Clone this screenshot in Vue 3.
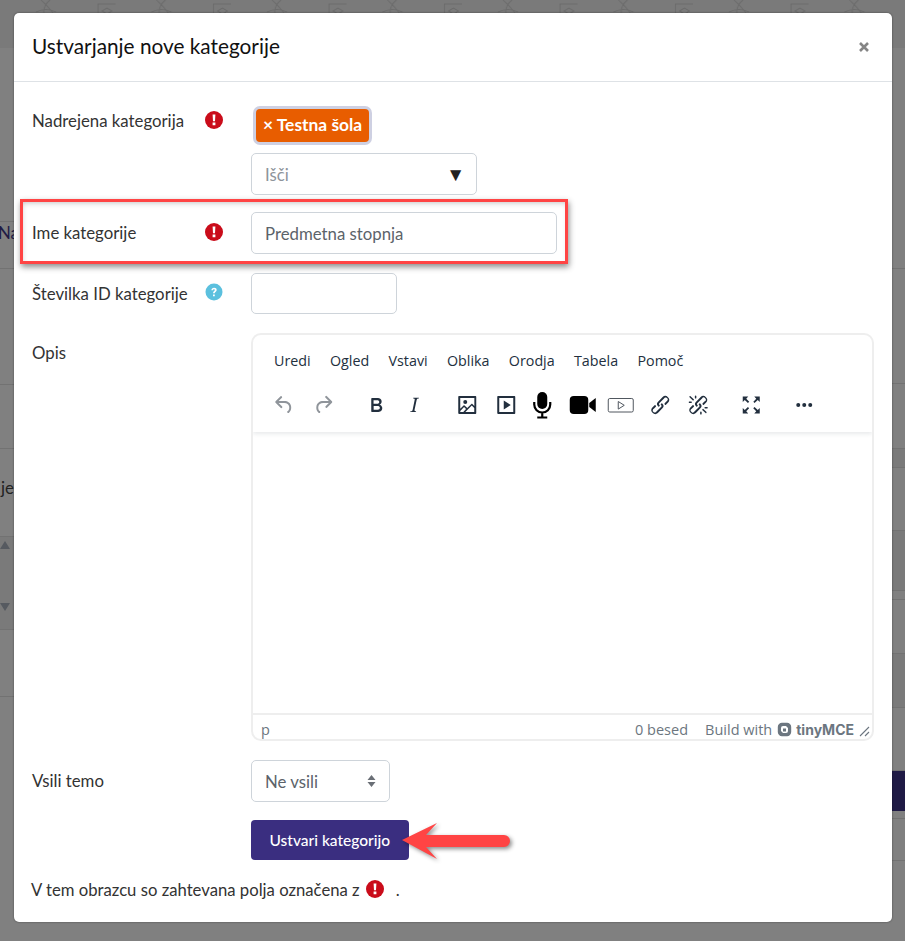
<script setup>
const leftBands = [
  { h: 174 },
  { h: 47, text: 'Na', cls: 'na' },
  { h: 116 },
  { h: 64 },
  { h: 88, text: 'je', cls: 'je' },
  { h: 93, dark: true, sort: true },
  { h: 67 },
  { h: 244, open: true }
]
const rightBands = [
  { h: 221 },
  { h: 115 },
  { h: 65 },
  { h: 19, dark: true },
  { h: 63 },
  { h: 60, dark: true },
  { h: 9 },
  { h: 54 },
  { h: 54, dark: true },
  { h: 63 },
  { h: 40, purple: true },
  { h: 8 },
  { h: 42 },
  { h: 80, open: true }
]
const menus = ['Uredi', 'Ogled', 'Vstavi', 'Oblika', 'Orodja', 'Tabela', 'Pomoč']
</script>

<template>
  <div class="page">
    <div class="backdrop">
      <svg class="strip" width="905" height="48" aria-hidden="true">
        <defs>
          <pattern id="tile" x="0" y="0" width="115.500" height="48" patternUnits="userSpaceOnUse">
            <g fill="none" stroke="#6b6b6b" stroke-width="1">
              <path d="M41 0c5 5 10 9 15 18M50 0c-5 4-7 8-6 14M36 12c6-3 12-4 20 0" />
              <rect x="98" y="4" width="18" height="22" />
              <path d="M102 11l5-3 5 3-5 3zM104 12v4h6v-4" />
            </g>
          </pattern>
        </defs>
        <rect width="905" height="48" fill="#7a7a7a" />
        <rect width="905" height="48" fill="url(#tile)" />
      </svg>
      <div class="sides">
        <div class="side">
          <div
            v-for="(b, i) in leftBands"
            :key="i"
            class="band"
            :class="{ dark: b.dark, open: b.open }"
            :style="{ height: b.h + 'px' }"
          >
            <span v-if="b.text" :class="b.cls">{{ b.text }}</span>
            <div v-if="b.sort" class="sort">
              <svg width="10" height="8" viewBox="0 0 10 8" aria-hidden="true"><path d="M5 0l5 8H0z" fill="#565a60" /></svg>
              <svg width="10" height="8" viewBox="0 0 10 8" aria-hidden="true"><path d="M5 8L0 0h10z" fill="#565a60" /></svg>
            </div>
          </div>
        </div>
        <div class="side">
          <div
            v-for="(b, i) in rightBands"
            :key="i"
            class="band"
            :class="{ dark: b.dark, purple: b.purple, open: b.open }"
            :style="{ height: b.h + 'px' }"
          ></div>
        </div>
      </div>
    </div>

    <div class="modal">
      <header class="modal-head">
        <h1 class="title">Ustvarjanje nove kategorije</h1>
        <svg class="close" width="12" height="12" viewBox="0 0 12 12" aria-hidden="true">
          <path d="M2 2l8 8M10 2l-8 8" stroke="#858585" stroke-width="2.600" />
        </svg>
      </header>

      <div class="modal-body">
        <div class="row row-parent">
          <div class="label">Nadrejena kategorija</div>
          <svg class="info" width="18" height="18" viewBox="0 0 18 18" aria-hidden="true">
            <circle cx="9" cy="9" r="9" fill="#ca0c1a" />
            <path d="M7.600 3.600h2.800l-.4 6.600H8zM7.600 11.400h2.800v2.800H7.600z" fill="#fff" />
          </svg>
          <div class="control stack">
            <div class="tag-ring"><span class="tag">× Testna šola</span></div>
            <div class="field search">
              <span class="placeholder">Išči</span>
              <span class="caret">▼</span>
            </div>
          </div>
        </div>

        <div class="row row-name">
          <div class="label">Ime kategorije</div>
          <svg class="info" width="18" height="18" viewBox="0 0 18 18" aria-hidden="true">
            <circle cx="9" cy="9" r="9" fill="#ca0c1a" />
            <path d="M7.600 3.600h2.800l-.4 6.600H8zM7.600 11.400h2.800v2.800H7.600z" fill="#fff" />
          </svg>
          <div class="control">
            <div class="field name-input">Predmetna stopnja</div>
          </div>
        </div>

        <div class="row row-id">
          <div class="label">Številka ID kategorije</div>
          <svg class="info" width="18" height="18" viewBox="0 0 18 18" aria-hidden="true">
            <circle cx="9" cy="9" r="8.500" fill="#5bc0de" />
            <path d="M6.400 7.200c0-1.600 1.100-2.500 2.700-2.500s2.600.9 2.600 2.200c0 1.800-2 1.800-2 3.400H8c0-2.300 1.900-2.300 1.900-3.300 0-.5-.4-.8-.9-.8s-1 .3-1 1zM8 11.400h1.800v1.900H8z" fill="#fff" />
          </svg>
          <div class="control">
            <div class="field id-input"></div>
          </div>
        </div>

        <div class="row row-editor">
          <div class="label">Opis</div>
          <div class="info-gap"></div>
          <div class="control">
            <div class="editor">
              <div class="ed-head">
                <div class="menubar">
                  <span v-for="m in menus" :key="m">{{ m }}</span>
                </div>
                <div class="toolbar">
                  <div class="tgroup">
                    <svg class="ti muted" viewBox="0 0 24 24"><path d="M6.400 8H12c3.700 0 6.200 2 6.800 5.100.6 2.700-.4 5.600-2.300 6.800a1 1 0 01-1-1.800c1.100-.6 1.800-2.700 1.400-4.600-.5-2.100-2.100-3.500-4.900-3.500H6.400l3.300 3.300a1 1 0 11-1.400 1.400l-5-5a1 1 0 010-1.400l5-5a1 1 0 011.400 1.400L6.400 8z" /></svg>
                    <svg class="ti muted" viewBox="0 0 24 24"><path d="M17.600 10H12c-2.800 0-4.400 1.400-4.900 3.500-.4 2 .3 4 1.400 4.600a1 1 0 11-1 1.800c-2-1.200-2.900-4.100-2.300-6.800.6-3 3-5.100 6.800-5.100h5.600l-3.300-3.300a1 1 0 111.400-1.400l5 5a1 1 0 010 1.400l-5 5a1 1 0 01-1.400-1.400l3.300-3.300z" /></svg>
                  </div>
                  <div class="tgroup">
                    <svg class="ti" viewBox="0 0 24 24"><path d="M7.800 19c-.3 0-.5 0-.6-.2l-.2-.5V5.700c0-.2 0-.4.2-.5l.6-.2h5c1.500 0 2.700.3 3.500 1 .7.600 1.100 1.400 1.100 2.500a3 3 0 01-.6 1.900c-.4.600-1 1-1.600 1.200.4.100.9.300 1.300.6s.8.700 1 1.200c.4.400.5 1 .5 1.600 0 1.300-.4 2.300-1.300 3-.8.700-2.100 1-3.800 1H7.800zm5-8.300c.6 0 1.200-.1 1.600-.5.4-.3.6-.7.6-1.300 0-1.100-.8-1.700-2.300-1.700H9.300v3.500h3.400zm.5 6c.7 0 1.300-.1 1.700-.4.4-.4.6-.9.6-1.500s-.2-1-.7-1.400c-.4-.3-1-.4-2-.4H9.400v3.800h4z" /></svg>
                    <svg class="ti" viewBox="0 0 24 24"><path d="M16.700 4.700l-.1.900h-.3c-.6 0-1 0-1.400.3-.3.3-.4.6-.5 1.100l-2.100 9.800v.6c0 .5.4.8 1.400.8h.2l-.2.8H8l.2-.8h.2c1.100 0 1.800-.5 2-1.500l2-9.800.1-.5c0-.6-.4-.8-1.400-.8h-.3l.2-.9h5.800z" /></svg>
                  </div>
                  <div class="tgroup">
                    <svg class="ti" viewBox="0 0 24 24"><path d="M5 15.700l3.300-3.200c.3-.3.7-.3 1 0L12 15l4.100-4c.3-.4.8-.4 1 0l2 1.900V5H5v10.700zM5 18V19h3l2.800-2.900-2-2L5 17.900zm14-3l-2.500-2.400-6.400 6.500H19v-4zM4 3h16c.6 0 1 .4 1 1v16c0 .6-.4 1-1 1H4a1 1 0 01-1-1V4c0-.6.4-1 1-1zm6 8a2 2 0 100-4 2 2 0 000 4z" /></svg>
                    <svg class="ti" viewBox="0 0 24 24"><path fill-rule="evenodd" d="M4 3h16c.6 0 1 .4 1 1v16c0 .6-.4 1-1 1H4a1 1 0 01-1-1V4c0-.6.4-1 1-1zm1 2v14h14V5zm4.500 2.500l7 4.500-7 4.500z" /></svg>
                    <svg class="ti black mic" viewBox="0 0 24 28">
                      <rect x="7" y="1" width="10" height="17" rx="5" />
                      <path d="M4 11v2.500a8 8 0 0016 0V11M12 22v4M7 26.500h10" fill="none" stroke="#000" stroke-width="2.200" />
                    </svg>
                    <svg class="ti black wide" viewBox="0 0 28 24"><rect x="0.500" y="3" width="18.500" height="18" rx="4" /><path d="M20 10l6.500-5v14L20 14z" /></svg>
                    <svg class="ti wide" viewBox="0 0 28 24"><g fill="none" stroke="#50575f" stroke-width="1"><rect x="1" y="5.500" width="25" height="13.500" rx="1.500" /><path d="M11 8.500l6 3.800-6 3.800z" /></g></svg>
                    <svg class="ti" viewBox="0 0 24 24"><path d="M6.200 12.300a1 1 0 011.400 1.400l-2 2a2 2 0 102.600 2.800l4.800-4.800a1 1 0 000-1.400 1 1 0 111.400-1.300 2.900 2.900 0 010 4L9.600 20a3.900 3.900 0 01-5.500-5.500l2-2zm11.600-.6a1 1 0 01-1.400-1.400l2-2a2 2 0 10-2.600-2.800L11 10.300a1 1 0 000 1.400A1 1 0 119.600 13a2.900 2.900 0 010-4L14.400 4a3.900 3.900 0 015.500 5.500l-2 2z" /></svg>
                    <svg class="ti" viewBox="0 0 24 24"><path d="M6.200 12.300a1 1 0 011.400 1.400l-2.100 2a2 2 0 102.700 2.800l4.800-4.800a1 1 0 000-1.400 1 1 0 111.400-1.300 2.900 2.900 0 010 4L9.600 20a3.900 3.900 0 01-5.500-5.500l2-2zm11.600-.6a1 1 0 01-1.400-1.400l2.100-2a2 2 0 10-2.700-2.800L11 10.300a1 1 0 000 1.400A1 1 0 119.600 13a2.900 2.900 0 010-4L14.400 4a3.900 3.900 0 015.500 5.500l-2 2zM7.600 6.300a.8.8 0 01-1 1.100L3.300 4.200a.7.7 0 111-1l3.200 3.100zM5.100 8.600a.8.8 0 010 1.500H3a.8.8 0 010-1.500H5zm5-3.500a.8.8 0 01-1.500 0V3a.8.8 0 011.500 0v2zm6 11.800a.8.8 0 011-1l3.200 3.200a.8.8 0 01-1 1L16 17zm-2.200 2a.8.8 0 011.500 0V21a.8.8 0 01-1.500 0V19zm5-3.500a.7.7 0 110-1.500H21a.8.8 0 010 1.500H19z" /></svg>
                  </div>
                  <div class="tgroup">
                    <svg class="ti" viewBox="0 0 24 24"><path d="M15.300 10l-1.200-1.300 2.900-3L15 3.500h5.500V9l-2-2-3.200 3zm-6.600 4l1.200 1.300-2.900 3 2 2.200H3.500V15l2 2 3.200-3zm0-4l-3.200-3-2 2V3.500H9l-2 2.200 3 3L8.700 10zm6.600 4l3.200 3 2-2v5.500H15l2-2.200-3-3 1.300-1.300z" /></svg>
                  </div>
                  <div class="tgroup">
                    <svg class="ti" viewBox="0 0 24 24"><circle cx="6" cy="12" r="2" /><circle cx="12" cy="12" r="2" /><circle cx="18" cy="12" r="2" /></svg>
                  </div>
                </div>
              </div>
              <div class="ed-area"></div>
              <div class="ed-foot">
                <span class="path">p</span>
                <span class="words">0 besed</span>
                <span class="built">Build with</span>
                <svg class="tlogo" width="15" height="15" viewBox="0 0 15 15" aria-hidden="true">
                  <path fill-rule="evenodd" d="M5 .8h5A4.200 4.200 0 0114.200 5v5a4.200 4.200 0 01-4.200 4.200H5A4.200 4.200 0 01.8 10V5A4.200 4.200 0 015 .8zm1 3.200a2 2 0 00-2 2v3l2 2h3a2 2 0 002-2V6L9 4zm0 2.500h3v3H6z" fill="#6c7680" />
                </svg>
                <span class="tname">tinyMCE</span>
                <svg class="grip" width="11" height="11" viewBox="0 0 11 11" aria-hidden="true">
                  <path d="M1 10l9-9M6 10l4-4" stroke="#6c7680" stroke-width="1.100" />
                </svg>
              </div>
            </div>
          </div>
        </div>

        <div class="row row-theme">
          <div class="label">Vsili temo</div>
          <div class="info-gap"></div>
          <div class="control">
            <div class="field theme-select">
              <span>Ne vsili</span>
              <svg width="9" height="14" viewBox="0 0 9 14" aria-hidden="true">
                <path d="M4.500 1l4 5H.5zM4.500 13l4-5H.5z" fill="#6a6f76" />
              </svg>
            </div>
          </div>
        </div>

        <div class="row row-submit">
          <div class="label"></div>
          <div class="info-gap"></div>
          <div class="control"><div class="submit">Ustvari kategorijo</div></div>
        </div>

        <p class="note">
          V tem obrazcu so zahtevana polja označena z
          <svg class="note-icon" width="18" height="18" viewBox="0 0 18 18" aria-hidden="true">
            <circle cx="9" cy="9" r="9" fill="#ca0c1a" />
            <path d="M7.600 3.600h2.800l-.4 6.600H8zM7.600 11.400h2.800v2.800H7.600z" fill="#fff" />
          </svg>
          <span class="dot">.</span>
        </p>
      </div>
    </div>

    <div class="callout"></div>
    <svg class="arrow" width="130" height="50" viewBox="0 0 130 50" aria-hidden="true">
      <path d="M6 20L41 3l-11 12h78a5.800 5.800 0 010 12H30l11 12z" fill="#ff4444" />
    </svg>
  </div>
</template>

<style>
html, body { margin: 0; padding: 0; }
</style>

<style scoped>
.page {
  position: relative;
  width: 905px;
  height: 941px;
  overflow: hidden;
  background: #808080;
  font-family: "Lato", "Liberation Sans", sans-serif;
}
.strip { display: block; }
.sides { display: flex; justify-content: space-between; }
.side { width: 40px; }
.band {
  box-sizing: border-box;
  border-bottom: 1px solid #727272;
  display: flex;
  overflow: hidden;
  background: #808080;
}
.band.open { border-bottom: 0; }
.band.dark { background: #7a7a7a; }
.band.purple { background: #1f1a45; border-bottom: 0; }
.na {
  color: #1f1b45;
  font-size: 16.800px;
  margin: 0 0 0 -2px;
}
.je {
  color: #222;
  font-size: 16.800px;
  margin: 28px 0 0 1px;
}
.sort {
  display: flex;
  flex-direction: column;
  gap: 54px;
  padding-top: 4px;
}

.modal {
  position: absolute;
  left: 14px;
  top: 13px;
  width: 878px;
  height: 909px;
  background: #fff;
  border-radius: 5px;
  box-shadow: 0 0 2px rgba(0, 0, 0, 0.5);
  display: flex;
  flex-direction: column;
}
.modal-head {
  height: 69px;
  box-sizing: border-box;
  border-bottom: 1px solid #dee2e6;
  display: flex;
  align-items: center;
  justify-content: space-between;
  padding: 0 22px 3px 18px;
}
.close { margin-top: 3px; }
.title {
  margin: 0;
  font-size: 20.800px;
  font-weight: 400;
  color: #111;
}
.modal-body {
  padding: 24px 18px 0 18px;
  color: #333;
  font-size: 16.800px;
}
.row { display: flex; align-items: flex-start; }
.label { width: 173px; flex: none; line-height: 30px; }
.info { flex: none; margin-top: 5px; }
.info-gap { width: 18px; flex: none; }
.control { margin-left: 28px; flex: 1; min-width: 0; }
.stack { display: flex; flex-direction: column; align-items: flex-start; }
.row-name { margin-top: 17px; }
.row-name .label { line-height: 42px; }
.row-id .label { line-height: 41px; }
.row-name .info { margin-top: 11px; }
.row-id { margin-top: 19px; }
.row-id .info { margin-top: 10px; }
.row-editor { margin-top: 19px; }
.row-editor .label { margin-top: 5px; }
.row-theme { margin-top: 19px; }
.row-theme .label { line-height: 42px; }
.row-submit { margin-top: 18px; }

.tag-ring {
  margin-left: 2px;
  padding: 3px;
  background: #ced0e2;
  border-radius: 7px;
}
.tag {
  display: block;
  background: #e85d00;
  color: #fff;
  border-radius: 4px;
  height: 33px;
  line-height: 31px;
  padding: 0 7px;
  font-weight: 700;
  font-size: 17.400px;
}
.field {
  box-sizing: border-box;
  height: 42px;
  border: 1px solid #ced4da;
  border-radius: 5px;
  display: flex;
  align-items: center;
  padding: 0 13px;
  color: #5c636a;
}
.search {
  width: 226px;
  margin-top: 8px;
  justify-content: space-between;
}
.placeholder { color: #8e949b; }
.caret { color: #222; font-size: 19px; margin-right: -2px; }
.name-input { width: 306px; }
.id-input { width: 146px; height: 41px; }
.theme-select { width: 139px; justify-content: space-between; }

.editor {
  box-sizing: border-box;
  width: 623px;
  height: 408px;
  border: 2px solid #eee;
  border-radius: 10px;
  display: flex;
  flex-direction: column;
  overflow: hidden;
  font-family: "Open Sans", "Noto Sans", sans-serif;
}
.ed-head {
  height: 97px;
  flex: none;
  box-shadow: 0 2px 4px rgba(34, 47, 62, 0.1);
  box-sizing: border-box;
}
.menubar {
  display: flex;
  gap: 19.300px;
  padding: 16px 0 0 21px;
  font-size: 14.300px;
  line-height: 20px;
  color: #222f3e;
}
.toolbar {
  display: flex;
  padding: 22px 0 0 12px;
}
.tgroup { display: flex; align-items: center; height: 24px; margin-right: 14.500px; }
.ti {
  width: 24px;
  height: 24px;
  padding: 0 7.250px;
  fill: #222f3e;
  flex: none;
}
.ti.muted { fill: #90959b; }
.ti.black { fill: #000; }
.ti.wide { width: 28px; padding: 0 5.250px; }
.ti.mic { height: 28px; margin: 0 2.500px 0 -2.500px; }
.ed-area { flex: 1; }
.ed-foot {
  height: 26px;
  flex: none;
  box-sizing: border-box;
  border-top: 2px solid #eee;
  padding: 5px 0 0 8px;
  display: flex;
  align-items: center;
  font-size: 14.500px;
  color: #6c7680;
}
.path { margin-right: auto; }
.built { margin-left: 17px; }
.tlogo { margin-left: 5px; }
.tname {
  font-family: "Inter", "Liberation Sans", sans-serif;
  font-weight: 700;
  font-size: 14px;
  margin-left: 4px;
}
.grip { margin: 3px 2px 0 5px; }

.submit {
  display: inline-block;
  background: #3a2e80;
  color: #fff;
  border-radius: 4px;
  height: 40px;
  line-height: 40px;
  padding: 0 18.500px;
  font-weight: 500;
  font-size: 15.500px;
}
.note {
  margin: 19px 0 0 -1px;
  line-height: 22px;
  font-size: 16.700px;
  display: flex;
  align-items: center;
  gap: 6px;
}
.note-icon { flex: none; margin-top: -2px; }
.dot { margin-left: 6px; }

.callout {
  position: absolute;
  left: 20px;
  top: 199px;
  width: 548px;
  height: 65px;
  box-sizing: border-box;
  border: 3px solid #ff4444;
  box-shadow: 1px 3px 6px rgba(0, 0, 0, 0.45), inset 1px 3px 6px -3px rgba(0, 0, 0, 0.3);
}
.arrow {
  position: absolute;
  left: 396px;
  top: 820px;
  filter: drop-shadow(2px 2px 2px rgba(0, 0, 0, 0.45));
}
</style>
